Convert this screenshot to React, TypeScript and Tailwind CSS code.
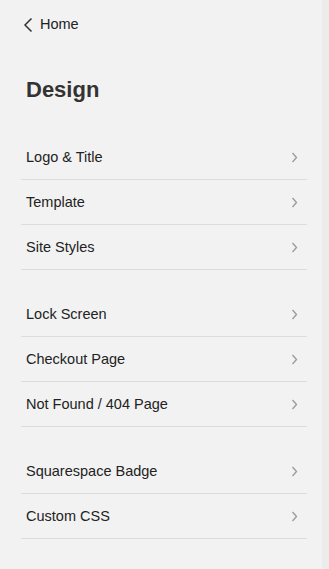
const groups: string[][] = [
    ["Logo & Title", "Template", "Site Styles"],
    ["Lock Screen", "Checkout Page", "Not Found / 404 Page"],
    ["Squarespace Badge", "Custom CSS"],
]

function Row({ label }: { label: string }) {
    return (
        <div className="h-[45px] flex items-center justify-between border-b border-[#dcdcdc] pl-[5px] pr-[9px]">
            <span className="text-[14.5px] text-[#222] pt-[2px]">{label}</span>
            <svg width="7" height="11" viewBox="0 0 7 11" fill="none" className="text-[#999]">
                <path d="M1.5 1 L5.5 5.5 L1.5 10" stroke="currentColor" strokeWidth="1.3" />
            </svg>
        </div>
    )
}

export default function App() {
    return (
        <div className="w-full h-[569px] flex bg-[#f2f2f2] font-['Liberation_Sans',Arial,sans-serif] overflow-hidden">
            <div className="flex-1 flex flex-col">
                <div className="h-[49px] flex items-center gap-[7px] pl-[23px]">
                    <svg width="10" height="16" viewBox="0 0 10 16" fill="none" className="text-[#333]">
                        <path d="M8.5 1.5 L2 8 L8.5 14.5" stroke="currentColor" strokeWidth="1.5" />
                    </svg>
                    <span className="text-[14.5px] text-[#222] pt-[1px]">Home</span>
                </div>
                <h1 className="pl-[26px] pt-[26px] h-[86px] text-[22px] font-bold text-[#333] leading-[30px]">Design</h1>
                <div className="flex flex-col gap-[22px] pl-[21px] pr-[15px]">
                    {groups.map((group, gi) => (
                        <div key={gi} className="flex flex-col">
                            {group.map(label => <Row label={label} key={label} />)}
                        </div>
                    ))}
                </div>
            </div>
            <div className="w-[7px] bg-[#ececec]"></div>
        </div>
    )
}
